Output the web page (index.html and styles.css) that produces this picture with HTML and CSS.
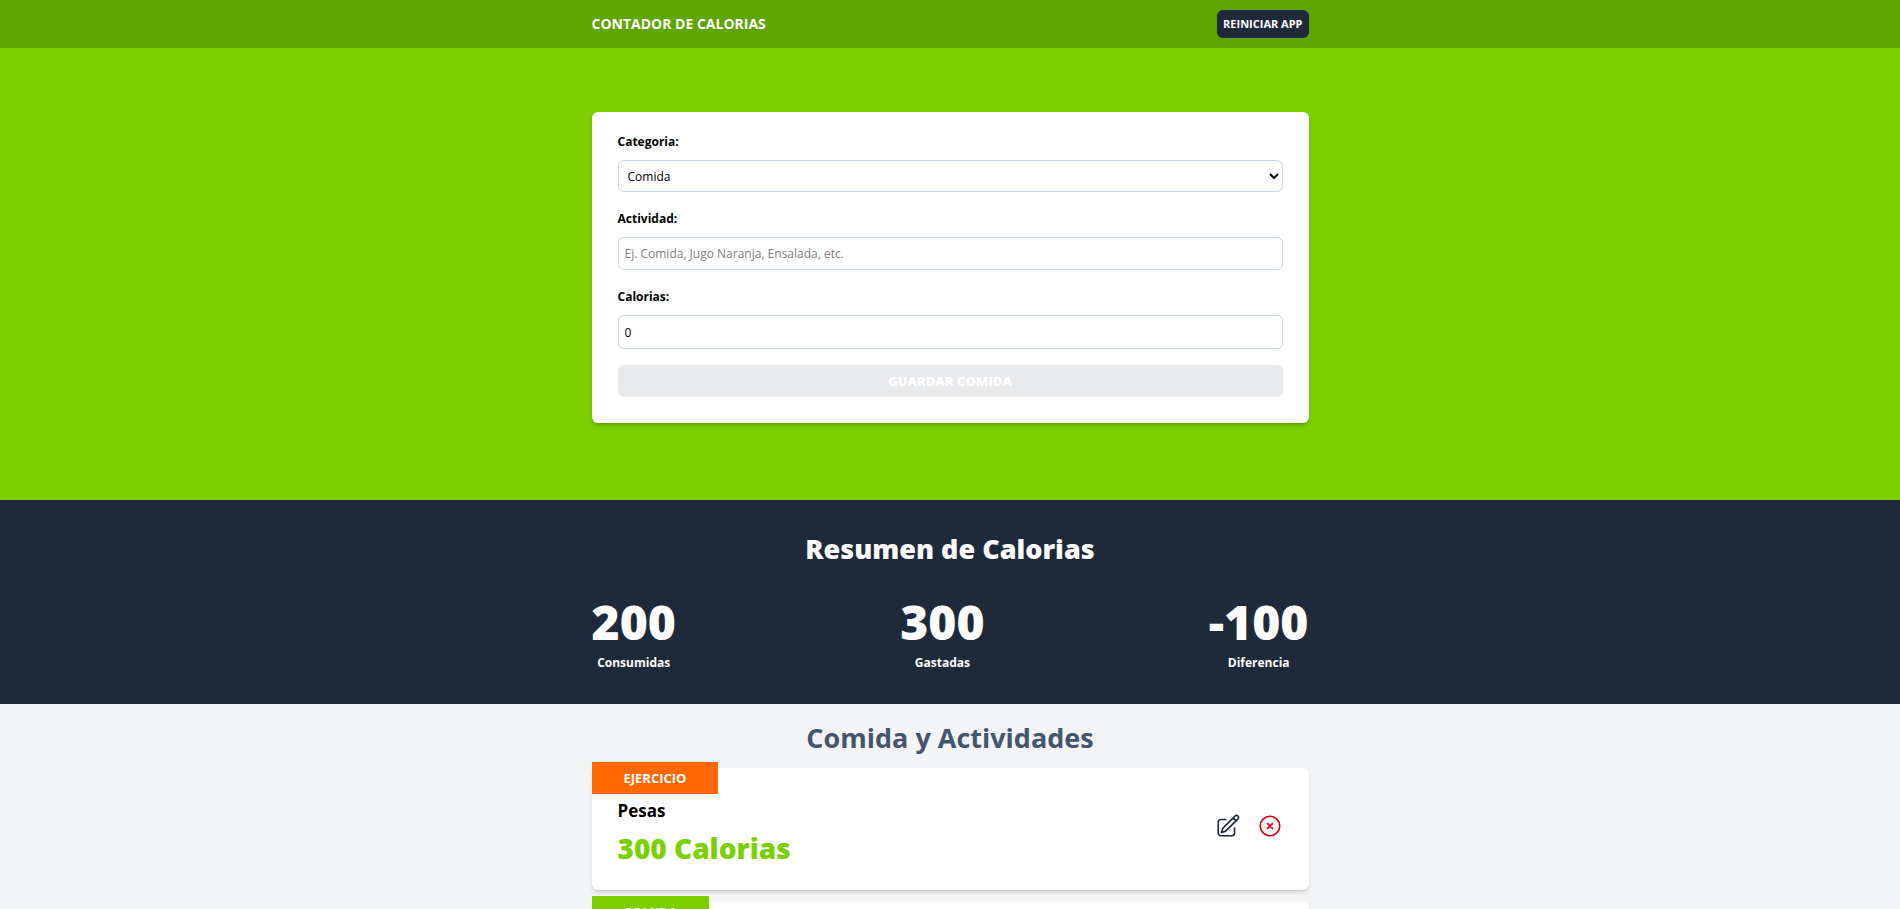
FILE: index.html
```html
<!DOCTYPE html>
<html lang="es">
<head>
<meta charset="utf-8">
<title>Contador de Calorias</title>
<link rel="stylesheet" href="styles.css">
</head>
<body>
<header class="topbar">
  <div class="container topbar-row">
    <h1 class="brand">CONTADOR DE CALORIAS</h1>
    <button class="reset" type="button">REINICIAR APP</button>
  </div>
</header>

<section class="hero">
  <div class="container">
    <form class="form">
      <div class="field">
        <label for="category">Categoria:</label>
        <select id="category" class="control control-select">
          <option>Comida</option>
          <option>Ejercicio</option>
        </select>
      </div>
      <div class="field">
        <label for="name">Actividad:</label>
        <input id="name" class="control control-text" type="text" placeholder="Ej. Comida, Jugo Naranja, Ensalada, etc.">
      </div>
      <div class="field">
        <label for="calories">Calorias:</label>
        <input id="calories" class="control control-number" type="number" value="0">
      </div>
      <button class="submit" type="submit" disabled>GUARDAR COMIDA</button>
    </form>
  </div>
</section>

<section class="summary">
  <div class="container">
    <h2 class="summary-title">Resumen de Calorias</h2>
    <div class="stats">
      <p class="stat"><span class="stat-value">200</span>Consumidas</p>
      <p class="stat"><span class="stat-value">300</span>Gastadas</p>
      <p class="stat"><span class="stat-value">-100</span>Diferencia</p>
    </div>
  </div>
</section>

<section class="list">
  <div class="container">
    <h2 class="list-title">Comida y Actividades</h2>
    <article class="activity">
      <p class="badge badge-exercise">EJERCICIO</p>
      <div>
        <p class="activity-name">Pesas</p>
        <p class="activity-calories">300 Calorias</p>
      </div>
      <div class="actions">
        <button class="icon-button" type="button" aria-label="Editar">
          <svg class="icon" viewBox="0 0 24 24"><path d="m16.862 4.487 1.687-1.688a1.875 1.875 0 1 1 2.652 2.652L10.582 16.07a4.5 4.5 0 0 1-1.897 1.13L6 18l.8-2.685a4.5 4.5 0 0 1 1.13-1.897l8.932-8.931Zm0 0L19.5 7.125M18 14v4.75A2.25 2.25 0 0 1 15.75 21H5.25A2.25 2.25 0 0 1 3 18.75V8.25A2.25 2.25 0 0 1 5.25 6H10"/></svg>
        </button>
        <button class="icon-button icon-button-danger" type="button" aria-label="Eliminar">
          <svg class="icon" viewBox="0 0 24 24"><path d="m9.75 9.75 4.5 4.5m0-4.5-4.5 4.5M21 12a9 9 0 1 1-18 0 9 9 0 0 1 18 0Z"/></svg>
        </button>
      </div>
    </article>
    <article class="activity">
      <p class="badge badge-food">COMIDA</p>
    </article>
  </div>
</section>
</body>
</html>
```
FILE: styles.css
```css
* {
  box-sizing: border-box;
  margin: 0;
}

html {
  height: 100%;
}

body {
  height: 100%;
  overflow: hidden;
  background: #f3f4f6;
  color: #000;
  font-family: "Open Sans", "Noto Sans", sans-serif;
  font-size: 12px;
  line-height: 20px;
}

button,
input,
select {
  font: inherit;
}

.container {
  max-width: 717px;
  margin: 0 auto;
}

.topbar {
  padding: 10px 0;
  background: #5ea500;
}

.topbar-row {
  display: flex;
  align-items: center;
  justify-content: space-between;
}

.brand {
  color: #fff;
  font-size: 14px;
  font-weight: 700;
}

.reset {
  padding: 6px;
  border: 0;
  border-radius: 6px;
  background: #1e2939;
  color: #fff;
  font-size: 11px;
  font-weight: 700;
  line-height: 16px;
}

.hero {
  padding: 64px 0 77px;
  background: #7ccf00;
}

.form {
  display: grid;
  gap: 16px;
  padding: 20px 26px 26px;
  border-radius: 6px;
  background: #fff;
  box-shadow: 0 3px 5px -1px rgb(0 0 0 / 20%), 0 2px 3px -2px rgb(0 0 0 / 20%);
}

.field {
  display: grid;
  gap: 8px;
}

.field + .field {
  padding-top: 1px;
}

.field label {
  font-weight: 700;
}

.control {
  width: 100%;
  border: 1px solid #cad5e2;
  border-radius: 6px;
  background: #fff;
  color: #000;
}

.control-select {
  height: 32px;
  padding: 0 5px;
}

.control-text {
  height: 33px;
  padding: 0 6px;
}

.control-number {
  height: 34px;
  padding: 0 6px;
}

.control-text::placeholder {
  color: #808080;
}

.submit {
  padding: 6px;
  border: 0;
  border-radius: 6px;
  background: #e8e9eb;
  color: #fff;
  font-size: 13px;
  font-weight: 800;
}

.summary {
  padding: 31px 0;
  background: #1e2939;
  color: #fff;
}

.summary-title {
  font-size: 27px;
  font-weight: 800;
  line-height: 36px;
  text-align: center;
}

.stats {
  display: flex;
  justify-content: space-between;
  margin-top: 31px;
}

.stat {
  display: grid;
  gap: 7px;
  font-weight: 700;
  text-align: center;
}

.stat-value {
  font-size: 48px;
  font-weight: 800;
  line-height: 48px;
}

.list {
  padding-top: 16px;
}

.list-title {
  color: #45556c;
  font-size: 27px;
  font-weight: 700;
  line-height: 36px;
  text-align: center;
}

.activity {
  position: relative;
  display: flex;
  align-items: center;
  justify-content: space-between;
  min-height: 122px;
  margin-top: 12px;
  padding: 19px 26px 26px;
  border-radius: 6px;
  background: #fff;
  box-shadow: 0 3px 5px -1px rgb(0 0 0 / 15%), 0 2px 3px -2px rgb(0 0 0 / 15%);
}

.badge {
  position: absolute;
  top: -6px;
  left: 0;
  padding: 6px 32px;
  color: #fff;
  font-size: 13px;
  font-weight: 700;
}

.badge-exercise {
  background: #ff6900;
}

.badge-food {
  background: #7ccf00;
}

.activity-name {
  margin-top: 12px;
  font-size: 17px;
  font-weight: 700;
  line-height: 24px;
}

.activity-calories {
  margin-top: 9px;
  color: #7ccf00;
  font-size: 28px;
  font-weight: 800;
  line-height: 32px;
}

.actions {
  display: flex;
  gap: 16px;
}

.icon-button {
  display: grid;
  padding: 0;
  border: 0;
  background: none;
  color: #1e2939;
}

.icon-button-danger {
  color: #d9000d;
}

.icon {
  width: 26px;
  height: 26px;
  fill: none;
  stroke: currentColor;
  stroke-width: 1.5;
  stroke-linecap: round;
  stroke-linejoin: round;
}
```
